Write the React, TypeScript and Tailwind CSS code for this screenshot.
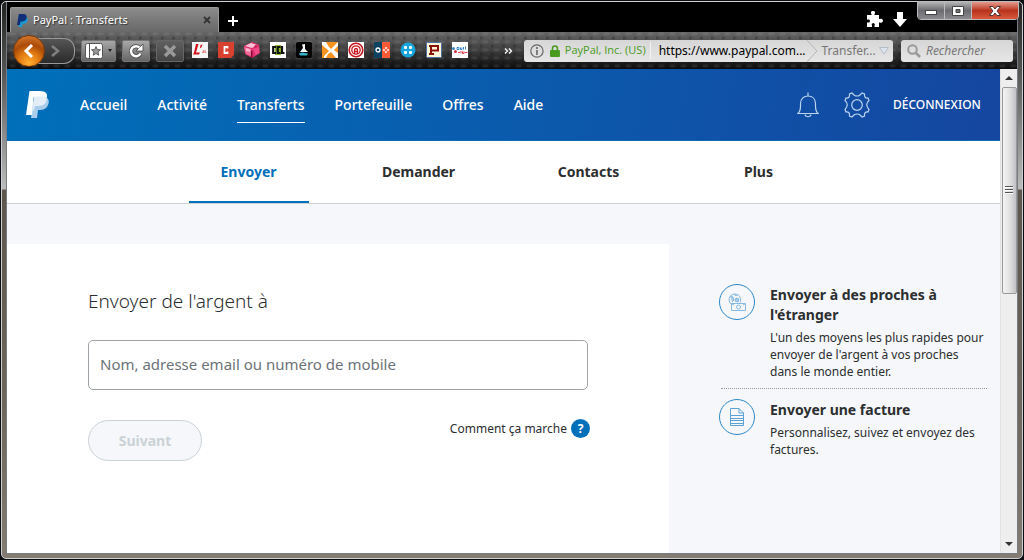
import type { ReactNode } from 'react';

const navItems = ['Accueil', 'Activité', 'Transferts', 'Portefeuille', 'Offres', 'Aide'];
const tabs = ['Envoyer', 'Demander', 'Contacts', 'Plus'];

const bookmarks: { name: string; icon: ReactNode }[] = [
  {
    name: 'Lettre',
    icon: (
      <>
        <rect width="16" height="16" fill="#f6f6f6" />
        <path d="M4 2H6.500L4 10.500H8L7 12.500H1L2 10.500z" fill="#d4121c" />
        <path d="M8.500 3L10.500 2.500L9 6H8z" fill="#d4121c" />
        <path d="M10.500 11L11.500 8.500V11M13 8V11M13 9.500L14.500 11" stroke="#e0606a" strokeWidth=".8" fill="none" />
      </>
    ),
  },
  {
    name: 'Capital',
    icon: (
      <>
        <path d="M0 0H16V13L13 16H0z" fill="#d8402f" />
        <path d="M9.500 6.500V5H6.500V11H9.500V9.500" stroke="#fff" strokeWidth="1.800" fill="none" />
      </>
    ),
  },
  {
    name: 'Cube',
    icon: (
      <>
        <path d="M8 0L15 3L16 11L8 16L1 12L0 4z" fill="#e0306f" />
        <path d="M1 4L7 1L13 3L8 6z" fill="#ffc3d6" />
        <path d="M0 5L7 7V14L2 12z" fill="#f26b98" />
        <path d="M2 6L6 7V10L2 9z" fill="#ffb3cb" />
        <path d="M9 7L15 5V11L12 13z" fill="#f04a88" />
        <path d="M11 3L14 4L10 6z" fill="#c2185b" />
        <path d="M7 9H8.500V16H7z" fill="#7d0836" />
      </>
    ),
  },
  {
    name: 'CCL',
    icon: (
      <>
        <rect width="16" height="16" fill="#fff" />
        <path d="M5 3H11V13H5z" fill="#8cb82a" />
        <path d="M6 5H3.200V11H6M10.500 5H7.700V11H10.500M12 4V11H14.500" stroke="#111" strokeWidth="2.200" fill="none" />
      </>
    ),
  },
  {
    name: 'Voilier',
    icon: (
      <>
        <rect width="16" height="16" rx="2" fill="#000" />
        <path d="M6 2.500L9 2V7L12 10H4L7 6z" fill="#fff" />
        <path d="M3 11.500L6 10.500L12 11.500L11 13.500H4z" fill="#35b3c9" />
      </>
    ),
  },
  {
    name: 'Outils',
    icon: (
      <>
        <rect width="16" height="16" fill="#fff" />
        <path d="M4 0H16L9 7L7 5z" fill="#f7931e" />
        <path d="M0 3L7 9L2 14V16H0z" fill="#f7931e" />
        <path d="M16 4V11L12 8zM9 10L14 16H4L6 12z" fill="#f7931e" />
      </>
    ),
  },
  {
    name: 'Antenne',
    icon: (
      <>
        <rect width="16" height="16" fill="#fff" />
        <circle cx="8" cy="8" r="6.800" stroke="#c4161c" strokeWidth="1.600" fill="none" />
        <circle cx="8" cy="8" r="4.200" stroke="#c4161c" strokeWidth="1.300" fill="none" />
        <path d="M6.500 12V8A1.500 1.500 0 0 1 9.500 8V12M6.500 9.500H9.500" stroke="#c4161c" strokeWidth="1.300" fill="none" />
      </>
    ),
  },
  {
    name: 'Ozone',
    icon: (
      <>
        <rect width="8" height="16" fill="#0b4360" />
        <rect x="8" width="8" height="16" fill="#ff5a36" />
        <circle cx="4" cy="8" r="2" stroke="#fff" strokeWidth="1.300" fill="none" />
        <path d="M12 4.800L13.200 6L12 7.200L10.800 6zM12 8.800L13.200 10L12 11.200L10.800 10zM10 6.800L11.200 8L10 9.200L8.800 8zM14 6.800L15.200 8L14 9.200L12.800 8z" fill="#fff" />
      </>
    ),
  },
  {
    name: 'Bouton',
    icon: (
      <>
        <circle cx="8" cy="8" r="7.500" fill="#16a5dc" />
        <rect x="4" y="4" width="3" height="3" rx="1" fill="#fff" />
        <rect x="9" y="4" width="3" height="3" rx="1" fill="#fff" />
        <rect x="4" y="9" width="3" height="3" rx="1" fill="#fff" />
        <rect x="9" y="9" width="3" height="3" rx="1" fill="#fff" />
      </>
    ),
  },
  {
    name: 'Presse',
    icon: (
      <>
        <rect x=".5" y=".5" width="15" height="15" rx="1" fill="#fff8d8" stroke="#5072a8" />
        <path d="M3 4H12V8.500H6M5 4V12M3 12H8" stroke="#8b1208" strokeWidth="2" fill="none" />
      </>
    ),
  },
  {
    name: 'Studio',
    icon: (
      <>
        <rect width="16" height="16" fill="#fff" />
        <circle cx="1.500" cy="6.500" r="1.500" fill="#3886c8" />
        <circle cx="3.500" cy="9.500" r="1.500" fill="#d62d43" />
        <path d="M5 5.500H7V7.500H5zM8.500 5.500V7.500H10V5.500M11.500 5V7.500M13.500 4.500V7.500" stroke="#3886c8" fill="none" />
        <path d="M6 10.500H8M9 9V11.500M10.500 9.500V11.500H12V9.500M13 10.500H15.500" stroke="#d8384e" fill="none" />
      </>
    ),
  },
];

const toolButton =
  'flex h-[22px] items-center justify-center rounded-[2px] border border-[#777] bg-linear-to-b from-[#a9a9a9] to-[#666]';

function TitleBar() {
  return (
    <div className="flex h-[30px] items-end">
      <div className="ml-[3px] flex h-[25px] w-[209px] items-center rounded-t-[2px] border border-b-0 border-[#999] bg-linear-to-b from-[#8b8b8b] to-[#686868] pr-[6px] pl-[6px]">
        <svg viewBox="0 0 12 14" className="mr-[5px] h-[13px] w-[11px]">
          <path d="M3 3H8.500C11 3 12 5 11.500 7C11 9.500 9 10.500 7 10.500H6L5.500 14H2z" fill="#179bd7" />
          <path d="M2 0H7C10 0 11 2 10.500 4C10 7 8 8 5.500 8H4L3 12H0z" fill="#102f78" />
        </svg>
        <span className="flex-1 text-[11px] text-white [text-shadow:1px_1px_1px_#333]">PayPal : Transferts</span>
        <button aria-label="Fermer l'onglet" className="flex h-4 w-[9px] items-center">
          <svg viewBox="0 0 8 8" className="h-2 w-2">
            <path d="M1 1L7 7M7 1L1 7" stroke="#333" strokeWidth="1.800" />
          </svg>
        </button>
      </div>
      <button aria-label="Nouvel onglet" className="ml-2 flex h-[23px] w-[12px] items-center">
        <svg viewBox="0 0 12 12" className="h-3 w-3">
          <path d="M6 1V11M1 6H11" stroke="#fff" strokeWidth="2" />
        </svg>
      </button>
      <div className="flex-1" />
      <div className="flex items-start gap-[10px] self-start">
        <button aria-label="Modules" className="mt-[9px]">
          <svg viewBox="0 0 16 16" className="h-4 w-4">
            <path d="M0 4H4.500V3A2 2 0 1 1 7.500 3V4H12V8H13A2 2 0 1 1 13 11.500H12V16H7.500V14.500A1.500 1.500 0 1 0 5 14.500V16H0V11.500H1.500A1.500 1.500 0 1 0 1.500 8.500H0z" fill="#fff" />
          </svg>
        </button>
        <button aria-label="Téléchargements" className="mt-[10px]">
          <svg viewBox="0 0 14 15" className="h-[15px] w-[14px]">
            <path d="M4 0H10V7H14L7 15L0 7H4z" fill="#fff" />
          </svg>
        </button>
        <div className="-mt-px -mr-[2px] flex h-[19px] overflow-hidden rounded-b-[4px] border border-[#bbb]">
          <button aria-label="Réduire" className="flex w-[27px] items-center justify-center border-r border-[#bbb] bg-linear-to-b from-[#b5b5b5] via-[#6c6c70] via-50% to-[#8c8c90]">
            <svg viewBox="0 0 12 8" className="h-2 w-3">
              <rect x=".5" y="3.500" width="11" height="4" fill="#fff" stroke="#444" />
            </svg>
          </button>
          <button aria-label="Agrandir" className="flex w-[27px] items-center justify-center border-r border-[#bbb] bg-linear-to-b from-[#b5b5b5] via-[#6c6c70] via-50% to-[#8c8c90]">
            <svg viewBox="0 0 12 10" className="h-[10px] w-3">
              <path d="M.5.5H11.500V9.500H.5zM4 3.500H8V6.500H4z" fill="#fff" fillRule="evenodd" stroke="#444" />
            </svg>
          </button>
          <button aria-label="Fermer" className="flex w-[46px] items-center justify-center bg-linear-to-b from-[#e49a8c] via-[#b8321c] via-50% to-[#d85a3c]">
            <svg viewBox="0 0 12 10" className="h-[10px] w-3">
              <path d="M.5.500H4L6 3L8 .5H11.500L8 5L11.500 9.500H8L6 7L4 9.500H.5L4 5z" fill="#fff" stroke="#533" />
            </svg>
          </button>
        </div>
      </div>
    </div>
  );
}

function Toolbar() {
  return (
    <div className="bg-linear-to-b from-[#666] via-[#3e3e3e] via-50% to-[#0c0c0c]">
      <div className="flex h-[37px] items-center bg-[radial-gradient(ellipse_4px_2px_at_50%_25%,rgba(255,255,255,0.08)_60%,transparent_100%),radial-gradient(ellipse_4px_2px_at_0%_75%,rgba(0,0,0,0.2)_60%,transparent_100%)] bg-[length:11px_8px] pr-1">
        <div className="flex w-[68px] items-center">
          <button aria-label="Page précédente" className="z-10 -my-px ml-[6px] h-[32px] w-[32px] rounded-full border border-[#7d3a08] bg-[radial-gradient(circle_at_50%_90%,#ffae30_0%,#e27a12_35%,#a94a08_60%,#e98a3c_100%)]">
            <svg viewBox="0 0 30 30" className="h-[30px] w-[30px]">
              <path d="M18 9L12 15L18 21" stroke="#fff" strokeWidth="3" fill="none" />
            </svg>
          </button>
          <button aria-label="Page suivante" className="-ml-[10px] flex h-[26px] w-[40px] items-center justify-center rounded-r-[11px] border border-l-0 border-[#999] bg-linear-to-b from-[#555] to-[#2b2b2b]">
            <svg viewBox="0 0 12 12" className="h-3 w-3">
              <path d="M3 1L9 6L3 11" stroke="#808080" strokeWidth="2.500" fill="none" />
            </svg>
          </button>
        </div>
        <button aria-label="Marque-pages" className={`${toolButton} ml-[6px] w-[35px] gap-[5px]`}>
          <svg viewBox="0 0 18 16" className="h-4 w-[18px]">
            <rect x=".5" y=".5" width="17" height="15" rx="2" fill="#fff" stroke="#555" />
            <path d="M4.500 1V15" stroke="#555" />
            <path d="M11 3.500L12.300 6.500L15.500 6.800L13 9L13.800 12.200L11 10.500L8.200 12.200L9 9L6.500 6.800L9.700 6.500z" fill="#999" stroke="#444" strokeWidth=".8" />
          </svg>
          <svg viewBox="0 0 4 3" className="h-[3px] w-1">
            <path d="M0 0H4L2 3z" fill="#222" />
          </svg>
        </button>
        <button aria-label="Actualiser" className={`${toolButton} ml-[6px] w-[28px]`}>
          <svg viewBox="0 0 16 16" className="h-4 w-4">
            <path d="M12.500 10.500A5 5 0 1 1 11.500 4.500" stroke="#444" strokeWidth="4" fill="none" />
            <path d="M15 1V8H8z" fill="#fff" stroke="#444" strokeWidth=".8" />
            <path d="M12.500 10.500A5 5 0 1 1 11.500 4.500" stroke="#fff" strokeWidth="2.500" fill="none" />
          </svg>
        </button>
        <button aria-label="Arrêter" className="ml-[6px] flex h-[22px] w-[28px] items-center justify-center rounded-[2px] border border-[#666] bg-linear-to-b from-[#606060] to-[#444]">
          <svg viewBox="0 0 14 14" className="h-[14px] w-[14px]">
            <path d="M2 2L12 12M12 2L2 12" stroke="#999" strokeWidth="3.500" />
          </svg>
        </button>
        <div className="ml-2 flex gap-[10px] pb-[2px]">
          {bookmarks.map((b) => (
            <a key={b.name} href="#" aria-label={b.name}>
              <svg viewBox="0 0 16 16" className="h-4 w-4">{b.icon}</svg>
            </a>
          ))}
        </div>
        <div className="flex-1" />
        <button aria-label="Plus de marque-pages" className="mr-[11px]">
          <svg viewBox="0 0 9 6" className="h-[6px] w-[9px]">
            <path d="M1 .5L3.500 3L1 5.500M5 .5L7.500 3L5 5.500" stroke="#fff" strokeWidth="1.300" fill="none" />
          </svg>
        </button>
        <div className="flex h-[22px] w-[369px] items-center rounded-[3px] bg-linear-to-b from-[#d6d6d6] to-[#e6e6e6] pr-1 pl-[6px] text-[12px]">
          <svg viewBox="0 0 14 14" className="mr-[6px] h-[14px] w-[14px]">
            <circle cx="7" cy="7" r="6.200" stroke="#666" strokeWidth="1.200" fill="none" />
            <path d="M7 3V5M7 6V11" stroke="#666" strokeWidth="1.600" />
          </svg>
          <svg viewBox="0 0 10 12" className="mr-[5px] h-3 w-[10px]">
            <path d="M2.500 6V3.500A2.500 2.500 0 0 1 7.500 3.500V6" stroke="#489b20" strokeWidth="1.600" fill="none" />
            <rect y="5" width="10" height="7" rx="1" fill="#489b20" />
          </svg>
          <span className="border-r border-[#f2f2f2] pr-1 font-['Open_Sans',sans-serif] text-[11px] whitespace-nowrap text-[#489b20]">PayPal, Inc. (US)</span>
          <span className="flex-1 pl-2 text-black">https://www.paypal.com...</span>
          <svg viewBox="0 0 12 22" className="h-[22px] w-3">
            <path d="M1 0L11 11L1 22" stroke="#b5b5b5" fill="none" />
          </svg>
          <span className="ml-1 w-[58px] text-[#777]">Transfer...</span>
          <svg viewBox="0 0 10 8" className="h-2 w-[10px]">
            <path d="M.5.5H9.500L5 7z" fill="#dde5f0" stroke="#b5bbc5" />
          </svg>
        </div>
        <label className="ml-[8px] flex h-[22px] w-[112px] items-center rounded-[3px] bg-linear-to-b from-[#d6d6d6] to-[#e6e6e6] px-[6px]">
          <svg viewBox="0 0 14 14" className="mr-[5px] h-[14px] w-[14px] shrink-0">
            <circle cx="5.500" cy="5.500" r="4.300" stroke="#999" strokeWidth="2" fill="none" />
            <path d="M9 9L13 13" stroke="#999" strokeWidth="2.500" />
          </svg>
          <input aria-label="Rechercher" placeholder="Rechercher" className="w-full min-w-0 text-[12px] italic outline-none placeholder:text-[#777]" />
        </label>
      </div>
    </div>
  );
}

function SiteHeader() {
  return (
    <header className="flex h-[72px] items-center border-b border-[#0f68b8] bg-linear-[100deg] from-[#0070ba] to-[#1546a0] pr-4 pl-[19px] text-white">
      <a href="#" aria-label="PayPal">
        <svg viewBox="0 0 23 27" className="h-[27px] w-[23px]">
          <path d="M9 6H20C23 8 23.500 11 22 14C20.500 18 17 19 13 19H12L11 27H5L7 12z" fill="#a9cdea" />
          <path d="M8 5H20.500C21.500 9 20 15 12.500 15H9L8 19L6.500 20z" fill="#e3eef9" />
          <path d="M3.500 0H14C19.500 0 22 3 20.800 6C19 5 16 5 9 5.500C8 5.500 7.800 6 7.500 7L6 24H0z" fill="#fff" />
        </svg>
      </a>
      <nav className="ml-[31px] flex gap-[30px] text-[14px] leading-5 font-medium">
        {navItems.map((item) => (
          <a key={item} href="#" className={item === 'Transferts' ? 'border-b border-white pt-2 pb-[7px]' : 'border-b border-transparent pt-2 pb-[7px]'}>
            {item}
          </a>
        ))}
      </nav>
      <div className="flex-1" />
      <button aria-label="Notifications">
        <svg viewBox="0 0 22 26" className="h-[26px] w-[22px]" fill="none" stroke="#bcd3ee" strokeWidth="1.200">
          <path d="M11 .5V4M.8 21.500C3.500 19.500 3.500 17 3.500 14V11.500C3.500 7 6.500 4 11 4S18.500 7 18.500 11.500V14C18.500 17 18.500 19.500 21.200 21.500zM8 22.500C8.500 25.500 13.500 25.500 14 22.500" />
        </svg>
      </button>
      <button aria-label="Paramètres" className="ml-[25px]">
        <svg viewBox="0 0 26 26" className="h-[26px] w-[26px]" fill="none" stroke="#bcd3ee" strokeWidth="1.200">
          <circle cx="13" cy="13" r="5.300" />
          <path d="M8 1L10.500 3.500Q13 4.500 15.500 3.500L18 1L20.500 2Q20 6.500 24 6L25 8.500Q20.500 12.500 25 17.500L24 20Q20 19.500 20.500 24L18 25L15.500 22.500Q13 21.500 10.500 22.500L8 25L5.500 24Q6 19.500 2 20L1 17.500Q5.500 12.500 1 8.500L2 6Q6 6.500 5.500 2z" />
        </svg>
      </button>
      <a href="#" className="ml-[23px] min-w-[91px] text-[12px] font-medium">DÉCONNEXION</a>
    </header>
  );
}

function Promo({ title, text, icon }: { title: string; text: string; icon: ReactNode }) {
  return (
    <a href="#" className="flex gap-[15px]">
      <span className="flex h-9 w-9 shrink-0 items-center justify-center rounded-full border border-[#2b87c6]">{icon}</span>
      <span className="flex flex-col gap-1 pt-px pr-1">
        <strong className="text-[14px] leading-5">{title}</strong>
        <span className="text-[12px] leading-[17px]">{text}</span>
      </span>
    </a>
  );
}

function Scrollbar() {
  return (
    <div aria-hidden="true" className="flex w-[17px] shrink-0 flex-col items-center border-l border-[#e2e2e2] bg-[#eee]">
      <svg viewBox="0 0 8 4" className="my-[7px] h-1 w-2 shrink-0">
        <path d="M4 0L8 4H0z" fill="#333" />
      </svg>
      <div className="flex h-[207px] w-[15px] items-center justify-center rounded-[2px] border border-[#999] bg-linear-to-r from-[#f4f4f4] via-[#e2e2e2] to-[#c2c2c6]">
        <svg viewBox="0 0 8 9" className="h-[9px] w-2">
          <path d="M0 .5H8M0 3.500H8M0 6.500H8" stroke="#555" />
          <path d="M0 1.500H8M0 4.500H8M0 7.500H8" stroke="#fff" />
        </svg>
      </div>
      <div className="flex-1" />
      <svg viewBox="0 0 8 4" className="my-[7px] h-1 w-2 shrink-0">
        <path d="M0 0H8L4 4z" fill="#333" />
      </svg>
    </div>
  );
}

export default function App() {
  return (
    <div className="flex min-h-screen flex-col bg-[#0b0d12] p-px font-['Noto_Sans',sans-serif] text-[#2c2e2f]">
      <div className="flex flex-1 flex-col rounded-[5px] border border-[#d0d0d0] bg-[linear-gradient(180deg,#222_0px,#555_70px,#bbb_187px,#5e554c_188px,#6d655e_400px,#847b73_100%)] px-1 pb-1">
        <div className="flex flex-1 flex-col border-x border-b border-[#777b84]">
          <div className="bg-black">
            <TitleBar />
            <Toolbar />
          </div>
          <div className="flex flex-1">
            <div className="flex flex-1 flex-col bg-[#f5f7fa]">
              <SiteHeader />
              <nav className="flex h-[63px] justify-center gap-[50px] border-b border-[#cbd0d5] bg-white text-[14px] font-bold">
                {tabs.map((tab) => (
                  <a
                    key={tab}
                    href="#"
                    className={
                      tab === 'Envoyer'
                        ? 'flex w-[120px] items-center justify-center border-b-2 border-[#0070ba] text-[#0070ba]'
                        : 'flex w-[120px] items-center justify-center border-b-2 border-transparent'
                    }
                  >
                    {tab}
                  </a>
                ))}
              </nav>
              <div className="flex flex-1">
                <main className="mt-10 w-2/3 bg-white pt-[42px] pr-[81px] pl-[81px]">
                  <h1 className="text-[19px] leading-[30px] font-light">Envoyer de l'argent à</h1>
                  <input
                    aria-label="Nom, adresse email ou numéro de mobile"
                    placeholder="Nom, adresse email ou numéro de mobile"
                    className="mt-6 h-[50px] w-full rounded-[5px] border border-[#9da3a6] px-[11px] pb-[2px] text-[15px] outline-none placeholder:text-[#6c7378]"
                  />
                  <div className="mt-[30px] flex items-start justify-between">
                    <button className="h-[41px] w-[114px] rounded-full border border-[#cbd2d6] bg-[#f5f7fa] text-[14px] font-bold text-[#cbd2d6]">Suivant</button>
                    <a href="#" className="-mt-px -mr-[2px] flex items-center gap-1 text-[12px]">
                      Comment ça marche
                      <span className="flex h-[19px] w-[19px] items-center justify-center rounded-full bg-[#0070ba] font-bold text-white">?</span>
                    </a>
                  </div>
                </main>
                <aside className="w-1/3 pt-20 pr-[11px] pl-[50px]">
                  <Promo
                    title="Envoyer à des proches à l'étranger"
                    text="L'un des moyens les plus rapides pour envoyer de l'argent à vos proches dans le monde entier."
                    icon={
                      <svg viewBox="0 0 18 18" className="h-[18px] w-[18px]" fill="none" stroke="#86b9e0">
                        <path d="M3.500 11.500A5.800 5.800 0 1 1 12 9.500" />
                        <path d="M2 3L5 4L6 7L4 9M6 1L8 3L10 1M8 5L11 6L10 9L7 8z" fill="#a9cdea" />
                        <path d="M3.500 10.500H17.500V17.500H3.500z" />
                        <circle cx="10.500" cy="14" r="2" />
                        <path d="M4 11L6 12M17 11L15 12" />
                      </svg>
                    }
                  />
                  <div className="mx-[2px] mt-2 mb-[10px] border-t border-dotted border-[#999]" />
                  <Promo
                    title="Envoyer une facture"
                    text="Personnalisez, suivez et envoyez des factures."
                    icon={
                      <svg viewBox="0 0 14 18" className="h-[18px] w-[14px]" fill="none" stroke="#5ca2d5">
                        <path d="M.5.500H9L13.500 5V17.500H.5zM9 .5V5H13.500M1 7.500H13M1 10.500H13M1 12.500H13M1 15.500H13" />
                      </svg>
                    }
                  />
                </aside>
              </div>
            </div>
            <Scrollbar />
          </div>
        </div>
      </div>
    </div>
  );
}
